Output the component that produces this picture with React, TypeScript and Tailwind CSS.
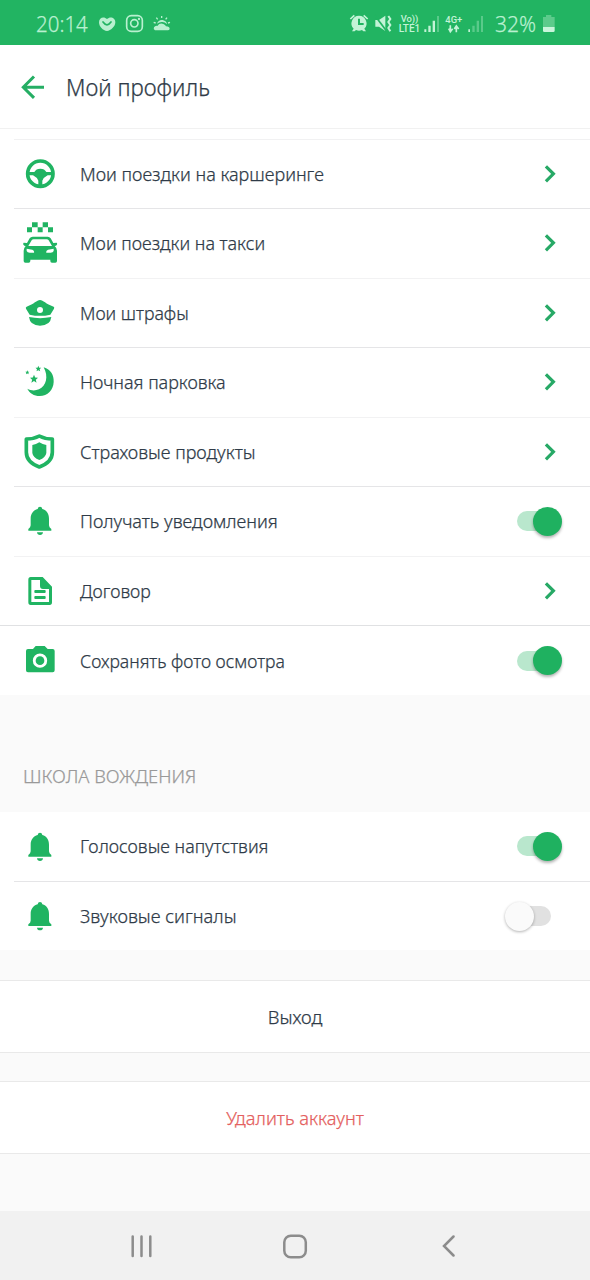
import type { ReactNode } from "react";

const G = "#20b462";

function Icon({ box, children }: { box: string; children: ReactNode }) {
  return (
    <svg className="ml-4 size-12 shrink-0" viewBox={box} fill={G}>
      {children}
    </svg>
  );
}

const Wheel = () => (
  <Icon box="48 30 144 144">
    <circle cx="121" cy="101" r="38" fill="none" stroke={G} strokeWidth="11" />
    <path d="M84 96H103Q108 86 121 86Q134 86 139 96H158V106H143Q131 112 127 122V138H115V122Q111 112 99 106H84Z" />
  </Icon>
);

const Taxi = () => (
  <Icon box="48 238 144 144">
    <path d="M96 248h17v15h-17zM128 248h16v15h-16zM81 263h15v15h-15zM113 263h15v15h-15zM144 263h15v15h-15z" />
    <path
      fillRule="evenodd"
      d="M98 291H143Q149 291 152 296L160 310L170 309Q174 315 168 318L164 319Q171 325 171 333V364Q171 369 166 369H156Q151 369 151 364V360H91V364Q91 369 86 369H76Q71 369 71 364V333Q71 325 77 319L73 318Q67 315 71 309L81 310L89 296Q92 291 98 291ZM101 299Q97 299 95 302L85 319H156L146 302Q144 299 140 299ZM80 327V334Q82 339 89 339H102Q104 334 97 330ZM161 327L144 330Q137 334 139 339H152Q159 339 161 334Z"
    />
  </Icon>
);

const Cap = () => (
  <Icon box="48 447 144 144">
    <path
      fillRule="evenodd"
      d="M120 480C130 480 137 492 161 500Q164 502 162 506L151 524Q120 531 89 524L78 506Q76 502 80 500C103 492 110 480 120 480ZM120 501A9 9 0 1 0 120 519A9 9 0 1 0 120 501Z"
    />
    <path d="M87 531Q120 538 154 531Q151 557 120 557Q90 557 87 531Z" />
  </Icon>
);

const Night = () => (
  <Icon box="48 25 144 144">
    <path d="M131 53C152 59 162 76 161 97C160 121 143 139 119 139C102 139 88 130 82 117C92 123 105 124 117 119C139 110 146 80 131 53Z" />
    <path d="M102 75L105.500 83.500L114 84L107.500 90L109.500 99L102 94L94 99L96.500 90L90 84L98.500 83.500Z" />
    <path d="M115 48L117.500 54L123.500 54.500L119 58.500L120.500 65L115 61.500L109.500 65L111 58.500L106.500 54.500L112.500 54Z" />
    <path d="M82 62L84 66L88 66.500L85 69.500L86 74L82 71.500L78 74L79 69.500L76 66.500L80 66Z" />
  </Icon>
);

const Shield = () => (
  <Icon box="48 234 144 144">
    <path
      d="M118 258Q135 267 157 267V307Q157 337 118 351Q79 337 79 307V267Q101 267 118 258Z"
      fill="none"
      stroke={G}
      strokeWidth="11"
      strokeLinejoin="round"
    />
    <path d="M118 277Q128 284 139 285V309Q137 323 118 330Q99 323 97 309V285Q108 284 118 277Z" />
  </Icon>
);

const Bell = ({ box = "48 442 144 144" }: { box?: string }) => (
  <Icon box={box}>
    <path d="M120 471Q126 471 127 478C140 482 147 492 147 507V527Q147 533 154 538V543H85V538Q92 533 92 527V507C92 492 100 482 113 478Q114 471 120 471Z" />
    <path d="M111 548H129Q128 556 120 556Q112 556 111 548Z" />
  </Icon>
);

const Doc = () => (
  <Icon box="48 21 144 144">
    <path
      fillRule="evenodd"
      d="M92 51H128L156 80V127Q156 135 149 135H92Q85 135 85 127V59Q85 51 92 51ZM94 60V126H147V87H129Q120 87 120 78V60Z"
    />
    <rect x="103" y="90" width="34" height="9" rx="3" />
    <rect x="103" y="108" width="34" height="9" rx="3" />
  </Icon>
);

const Camera = () => (
  <Icon box="48 229 144 144">
    <path
      fillRule="evenodd"
      d="M107 256H134L143 265H158Q164 265 164 271V329Q164 335 158 335H84Q78 335 78 329V271Q78 265 84 265H99ZM120 278.500A21.500 21.500 0 1 0 120 321.500A21.500 21.500 0 1 0 120 278.500Z"
    />
    <circle cx="120" cy="300" r="13" />
  </Icon>
);

const Chevron = () => (
  <svg className="mr-8 h-5 w-4" viewBox="0 0 16 20" fill="none" stroke="#27a966" strokeWidth="3.200">
    <path d="M3.900 2.300L11.400 9.800L3.900 17.300" />
  </svg>
);

function Toggle({ on }: { on: boolean }) {
  return (
    <div
      className={
        on
          ? "mr-7 flex h-7 w-[57px] items-center justify-end"
          : "mr-7 flex h-7 w-[57px] items-center justify-start"
      }
    >
      {on && <div className="-mr-[18px] h-5 w-[34px] rounded-full bg-[#b9e7cd]" />}
      <div
        className={
          on
            ? "z-10 size-[29px] rounded-full bg-[#1fb160] shadow-[0_2px_3px_rgba(0,0,0,0.3)]"
            : "z-10 size-[29px] rounded-full bg-[#fafafa] shadow-[0_1px_3px_rgba(0,0,0,0.3)]"
        }
      />
      {!on && <div className="-ml-[17px] h-5 w-[34px] rounded-full bg-[#e1e1e1]" />}
    </div>
  );
}

type RowProps = { icon: ReactNode; text: string; fit: string; end: ReactNode; line?: string };

function Row({ icon, text, fit, end, line }: RowProps) {
  return (
    <div className="flex h-[69.5px] flex-col bg-white">
      <div className="flex min-h-0 flex-1 items-center">
        {icon}
        <div className="ml-4 flex-1 pt-px">
          <span className={`inline-block origin-left whitespace-nowrap text-[18.3px] leading-6 ${fit}`}>
            {text}
          </span>
        </div>
        {end}
      </div>
      {line && <div className={`h-px shrink-0 ${line}`} />}
    </div>
  );
}

const inset = "ml-[14px] bg-[#e5e5e7]";
const faint = "ml-[14px] bg-[#f2f2f3]";

export default function App() {
  return (
    <div className="flex h-[1280px] w-[590px] flex-col overflow-hidden bg-[#fafafa] font-['Noto_Sans',sans-serif] font-light text-[#2f3b48] [-webkit-text-stroke:0.25px_currentColor]">
      <div className="flex h-[45px] shrink-0 items-center bg-[#22b462] pl-9 text-[#b9f0d0]">
        <span className="w-[58px] whitespace-nowrap pt-0.5 text-[21px] leading-6">
          <span className="inline-block origin-left scale-x-[0.975]">20:14</span>
        </span>
        <svg className="h-[45px] w-[90px]" viewBox="222 0 270 135" fill="#b9f0d0">
          <path d="M261 57C270 48 286 52 286 67C286 80 272 92 261 93C249 92 237 80 237 67C237 52 252 48 261 57Z" />
          <path d="M249 66Q261 83 273 66" fill="none" stroke="#22b462" strokeWidth="5" strokeLinecap="round" />
          <rect x="320" y="47" width="47" height="47" rx="14" fill="none" stroke="#b9f0d0" strokeWidth="5" />
          <circle cx="343" cy="70" r="11" fill="none" stroke="#b9f0d0" strokeWidth="5" />
          <circle cx="357" cy="57" r="3.500" />
          <path d="M405 91Q399 88 402 82Q406 76 412 78Q419 68 430 72Q436 74 438 79Q449 79 449 87Q448 91 443 91Z" />
          <path d="M411 71Q416 58 428 60Q440 63 441 73Q434 65 425 66Q417 66 411 71Z" />
          <path d="M425 48V54M409 53L413 58M441 53L437 58M401 67L407 69M450 67L444 69" stroke="#b9f0d0" strokeWidth="4" />
        </svg>
        <svg className="ml-[160px] h-[45px] w-[150px] [-webkit-text-stroke:0]" viewBox="12 0 450 135" fill="#c3f3d7">
          <path
            fillRule="evenodd"
            d="M57 47A23 23 0 0 1 73 86L78 94H70L66 90Q57 94 48 90L44 94H36L41 86A23 23 0 0 1 57 47ZM54 56V75H71V69H60V56Z"
          />
          <path d="M31 57L43 46M71 46L83 57" stroke="#c3f3d7" strokeWidth="5" />
          <path d="M106 60H117L136 47V93L117 80H106Z" />
          <path d="M104 46L139 92" stroke="#22b462" strokeWidth="5" />
          <path d="M145 48L151 57L145 66L151 75L145 84L151 94" fill="none" stroke="#c3f3d7" strokeWidth="6" />
          <g fontFamily="Roboto, sans-serif" fontWeight="500">
            <text x="182" y="66" fontSize="27" textLength="53" lengthAdjust="spacingAndGlyphs">Vo))</text>
            <text x="176" y="96" fontSize="31" textLength="65" lengthAdjust="spacingAndGlyphs">LTE1</text>
            <text x="316" y="68" fontSize="27" textLength="51" lengthAdjust="spacingAndGlyphs">4G+</text>
          </g>
          <path d="M253 88h6v8h-6zM265 77h7v19h-7zM278 62h7v34h-7zM385 88h5v8h-5z" />
          <path opacity=".35" d="M291 48h6v48h-6zM397 77h7v19h-7zM410 62h7v34h-7zM423 48h6v48h-6z" />
          <path d="M326 86L331 95L338 86M331 76V93M343 87L349 78L356 87M349 97V80" fill="none" stroke="#c3f3d7" strokeWidth="5" />
        </svg>
        <span className="ml-px w-[43px] whitespace-nowrap pt-0.5 text-[21px] leading-6">
          <span className="inline-block origin-left">32%</span>
        </span>
        <svg className="h-[45px] w-5" viewBox="594 0 60 135" fill="#c9f5db">
          <path opacity=".35" d="M609 51H618V45H634V51H644V81H609Z" />
          <path d="M609 81H644V92Q644 96 640 96H613Q609 96 609 92Z" />
        </svg>
      </div>

      <div className="flex h-[84px] shrink-0 items-center border-b border-[#f1f1f1] bg-white">
        <svg className="ml-5 h-8 w-[26px]" viewBox="0 0 26 32" fill="none" stroke="#25ae64" strokeWidth="3">
          <path d="M3 16.200H24M14 5.500L3.300 16.200L14 26.900" />
        </svg>
        <span className="ml-5 inline-block origin-left scale-x-[0.97] whitespace-nowrap text-[23px] leading-8">
          Мой профиль
        </span>
      </div>

      <div className="flex h-[10.6px] shrink-0 flex-col justify-end bg-white">
        <div className="ml-[14px] h-px bg-[#f1f1f2]" />
      </div>

      <div className="h-[555.4px] shrink-0 overflow-hidden">
        <Row icon={<Wheel />} text="Мои поездки на каршеринге" fit="scale-x-[0.985]" end={<Chevron />} line={inset} />
        <Row icon={<Taxi />} text="Мои поездки на такси" fit="scale-x-[0.979]" end={<Chevron />} line={faint} />
        <Row icon={<Cap />} text="Мои штрафы" fit="scale-x-[0.968]" end={<Chevron />} line={inset} />
        <Row icon={<Night />} text="Ночная парковка" fit="scale-x-[0.982]" end={<Chevron />} line={faint} />
        <Row icon={<Shield />} text="Страховые продукты" fit="scale-x-[0.986]" end={<Chevron />} line={inset} />
        <Row icon={<Bell />} text="Получать уведомления" fit="scale-x-[0.987]" end={<Toggle on />} line={faint} />
        <Row icon={<Doc />} text="Договор" fit="scale-x-[0.97]" end={<Chevron />} line="bg-[#e0e1e3]" />
        <Row icon={<Camera />} text="Сохранять фото осмотра" fit="scale-x-[0.962]" end={<Toggle on />} />
      </div>

      <div className="flex h-[117.2px] shrink-0 items-end pb-6 pl-[23px] text-[18.3px] leading-6 text-[#999]">
        <span className="inline-block origin-left scale-x-[1.003] whitespace-nowrap">ШКОЛА ВОЖДЕНИЯ</span>
      </div>

      <div className="h-[138px] shrink-0 overflow-hidden">
        <Row icon={<Bell box="48 439 144 144" />} text="Голосовые напутствия" fit="scale-x-[0.977]" end={<Toggle on />} line={inset} />
        <Row icon={<Bell box="48 441 144 144" />} text="Звуковые сигналы" fit="scale-x-[0.995]" end={<Toggle on={false} />} />
      </div>

      <button className="mt-[29.8px] flex h-[73px] shrink-0 items-center justify-center border-y border-[#e9e9e9] bg-white text-[18.3px]">
        <span className="inline-block scale-x-[1.01]">Выход</span>
      </button>
      <button className="mt-7 flex h-[73px] shrink-0 items-center justify-center border-y border-[#e9e9e9] bg-white text-[18.3px] text-[#e45f60]">
        <span className="inline-block scale-x-[0.997]">Удалить аккаунт</span>
      </button>

      <div className="mt-auto h-[69px] shrink-0 bg-[#f1f1f1]">
        <svg className="h-[69px] w-[590px]" viewBox="0 0 590 69" fill="none" stroke="#8c8c8c" strokeWidth="2.500" strokeLinecap="round">
          <path d="M132.700 25.500V45M141.500 25.500V45M150.300 25.500V45M453.500 25.500L444 35L453.500 44.500" />
          <rect x="284.300" y="24.700" width="21.500" height="21.500" rx="6.500" />
        </svg>
      </div>
    </div>
  );
}
